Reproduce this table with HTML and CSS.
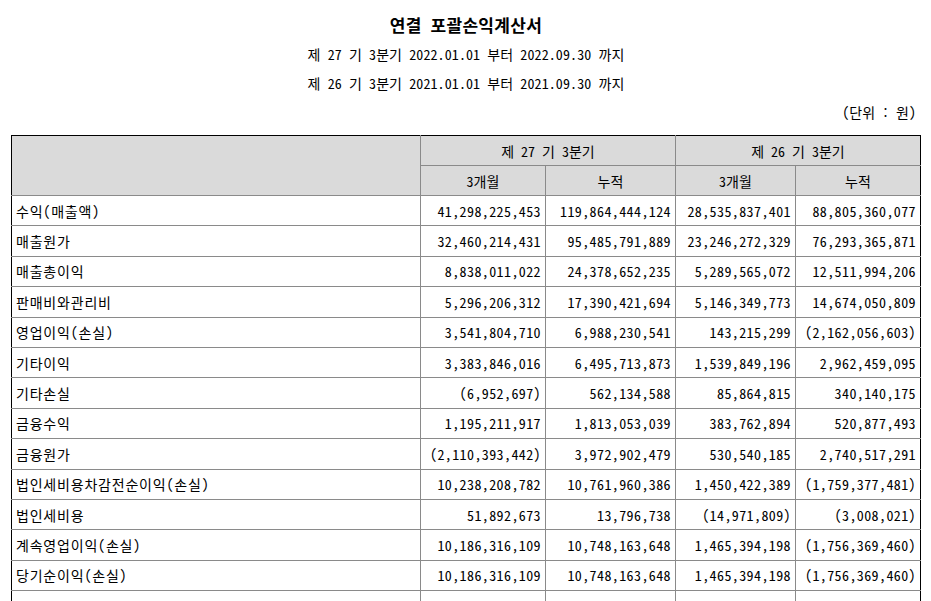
FILE: index.html
```html
<!DOCTYPE html>
<html lang="ko">
<head>
<meta charset="utf-8">
<title>연결 포괄손익계산서</title>
<link rel="stylesheet" href="styles.css">
</head>
<body>
<div class="page">
  <div class="title">연결 포괄손익계산서</div>
  <div class="sub">제 27 기 3분기 2022.01.01 부터 2022.09.30 까지</div>
  <div class="sub">제 26 기 3분기 2021.01.01 부터 2021.09.30 까지</div>
  <div class="unit">(단위 : 원)</div>
  <table class="fs">
    <colgroup>
      <col class="c-label"><col class="c1"><col class="c2"><col class="c3"><col class="c4">
    </colgroup>
    <thead>
      <tr class="h1">
        <th rowspan="2" class="blank"></th>
        <th colspan="2">제 27 기 3분기</th>
        <th colspan="2">제 26 기 3분기</th>
      </tr>
      <tr class="h2">
        <th>3개월</th><th>누적</th><th>3개월</th><th>누적</th>
      </tr>
    </thead>
    <tbody>
      <tr><td class="lbl">수익(매출액)</td><td>41,298,225,453</td><td>119,864,444,124</td><td>28,535,837,401</td><td>88,805,360,077</td></tr>
      <tr><td class="lbl">매출원가</td><td>32,460,214,431</td><td>95,485,791,889</td><td>23,246,272,329</td><td>76,293,365,871</td></tr>
      <tr><td class="lbl">매출총이익</td><td>8,838,011,022</td><td>24,378,652,235</td><td>5,289,565,072</td><td>12,511,994,206</td></tr>
      <tr><td class="lbl">판매비와관리비</td><td>5,296,206,312</td><td>17,390,421,694</td><td>5,146,349,773</td><td>14,674,050,809</td></tr>
      <tr><td class="lbl">영업이익(손실)</td><td>3,541,804,710</td><td>6,988,230,541</td><td>143,215,299</td><td>(2,162,056,603)</td></tr>
      <tr><td class="lbl">기타이익</td><td>3,383,846,016</td><td>6,495,713,873</td><td>1,539,849,196</td><td>2,962,459,095</td></tr>
      <tr><td class="lbl">기타손실</td><td>(6,952,697)</td><td>562,134,588</td><td>85,864,815</td><td>340,140,175</td></tr>
      <tr><td class="lbl">금융수익</td><td>1,195,211,917</td><td>1,813,053,039</td><td>383,762,894</td><td>520,877,493</td></tr>
      <tr><td class="lbl">금융원가</td><td>(2,110,393,442)</td><td>3,972,902,479</td><td>530,540,185</td><td>2,740,517,291</td></tr>
      <tr><td class="lbl">법인세비용차감전순이익(손실)</td><td>10,238,208,782</td><td>10,761,960,386</td><td>1,450,422,389</td><td>(1,759,377,481)</td></tr>
      <tr><td class="lbl">법인세비용</td><td>51,892,673</td><td>13,796,738</td><td>(14,971,809)</td><td>(3,008,021)</td></tr>
      <tr><td class="lbl">계속영업이익(손실)</td><td>10,186,316,109</td><td>10,748,163,648</td><td>1,465,394,198</td><td>(1,756,369,460)</td></tr>
      <tr><td class="lbl">당기순이익(손실)</td><td>10,186,316,109</td><td>10,748,163,648</td><td>1,465,394,198</td><td>(1,756,369,460)</td></tr>
      <tr><td class="lbl">&nbsp;</td><td></td><td></td><td></td><td></td></tr>
    </tbody>
  </table>
</div>
</body>
</html>
```
FILE: styles.css
```css
html, body {
  margin: 0;
  padding: 0;
  background: #ffffff;
}
body {
  font-family: "Noto Sans CJK KR", "Noto Sans", sans-serif;
  font-size: 14px;
  color: #000;
  font-feature-settings: "hwid" 1;
}
.page {
  padding: 10px 10px 0 11px;
  width: 910px;
}
.title {
  text-align: center;
  font-weight: bold;
  font-size: 17px;
  line-height: 30px;
  letter-spacing: 0.3px;
}
.sub {
  text-align: center;
  line-height: 29px;
  letter-spacing: 0.1px;
}
.unit {
  text-align: right;
  line-height: 29px;
  padding-right: 5px;
}
.fs {
  margin-top: 8px;
  width: 910px;
  border-collapse: collapse;
  table-layout: fixed;
  border-top: 1px solid #000;
  border-left: 1px solid #000;
  border-right: 1px solid #000;
}
.c-label { width: 409px; }
.c1 { width: 125px; }
.c2 { width: 130px; }
.c3 { width: 120px; }
.c4 { width: 125px; }
.fs th {
  background: #dadada;
  font-weight: normal;
  height: 29px;
  padding: 0;
  border: 1px solid #8a8a8a;
  text-align: center;
  vertical-align: middle;
}
.fs .h1 th { border-top: 1px solid #000; }
.fs .blank { border-left: 1px solid #000; }
.fs td {
  height: 29.4px;
  padding: 0 4px 0 4px;
  border: 1px solid #8a8a8a;
  text-align: right;
  vertical-align: middle;
  white-space: nowrap;
  letter-spacing: 0.4px;
}
.fs td.lbl {
  text-align: left;
  letter-spacing: 0.8px;
  border-left: 1px solid #000;
}
.fs td:last-child, .fs th:last-child {
  border-right: 1px solid #000;
}
```
